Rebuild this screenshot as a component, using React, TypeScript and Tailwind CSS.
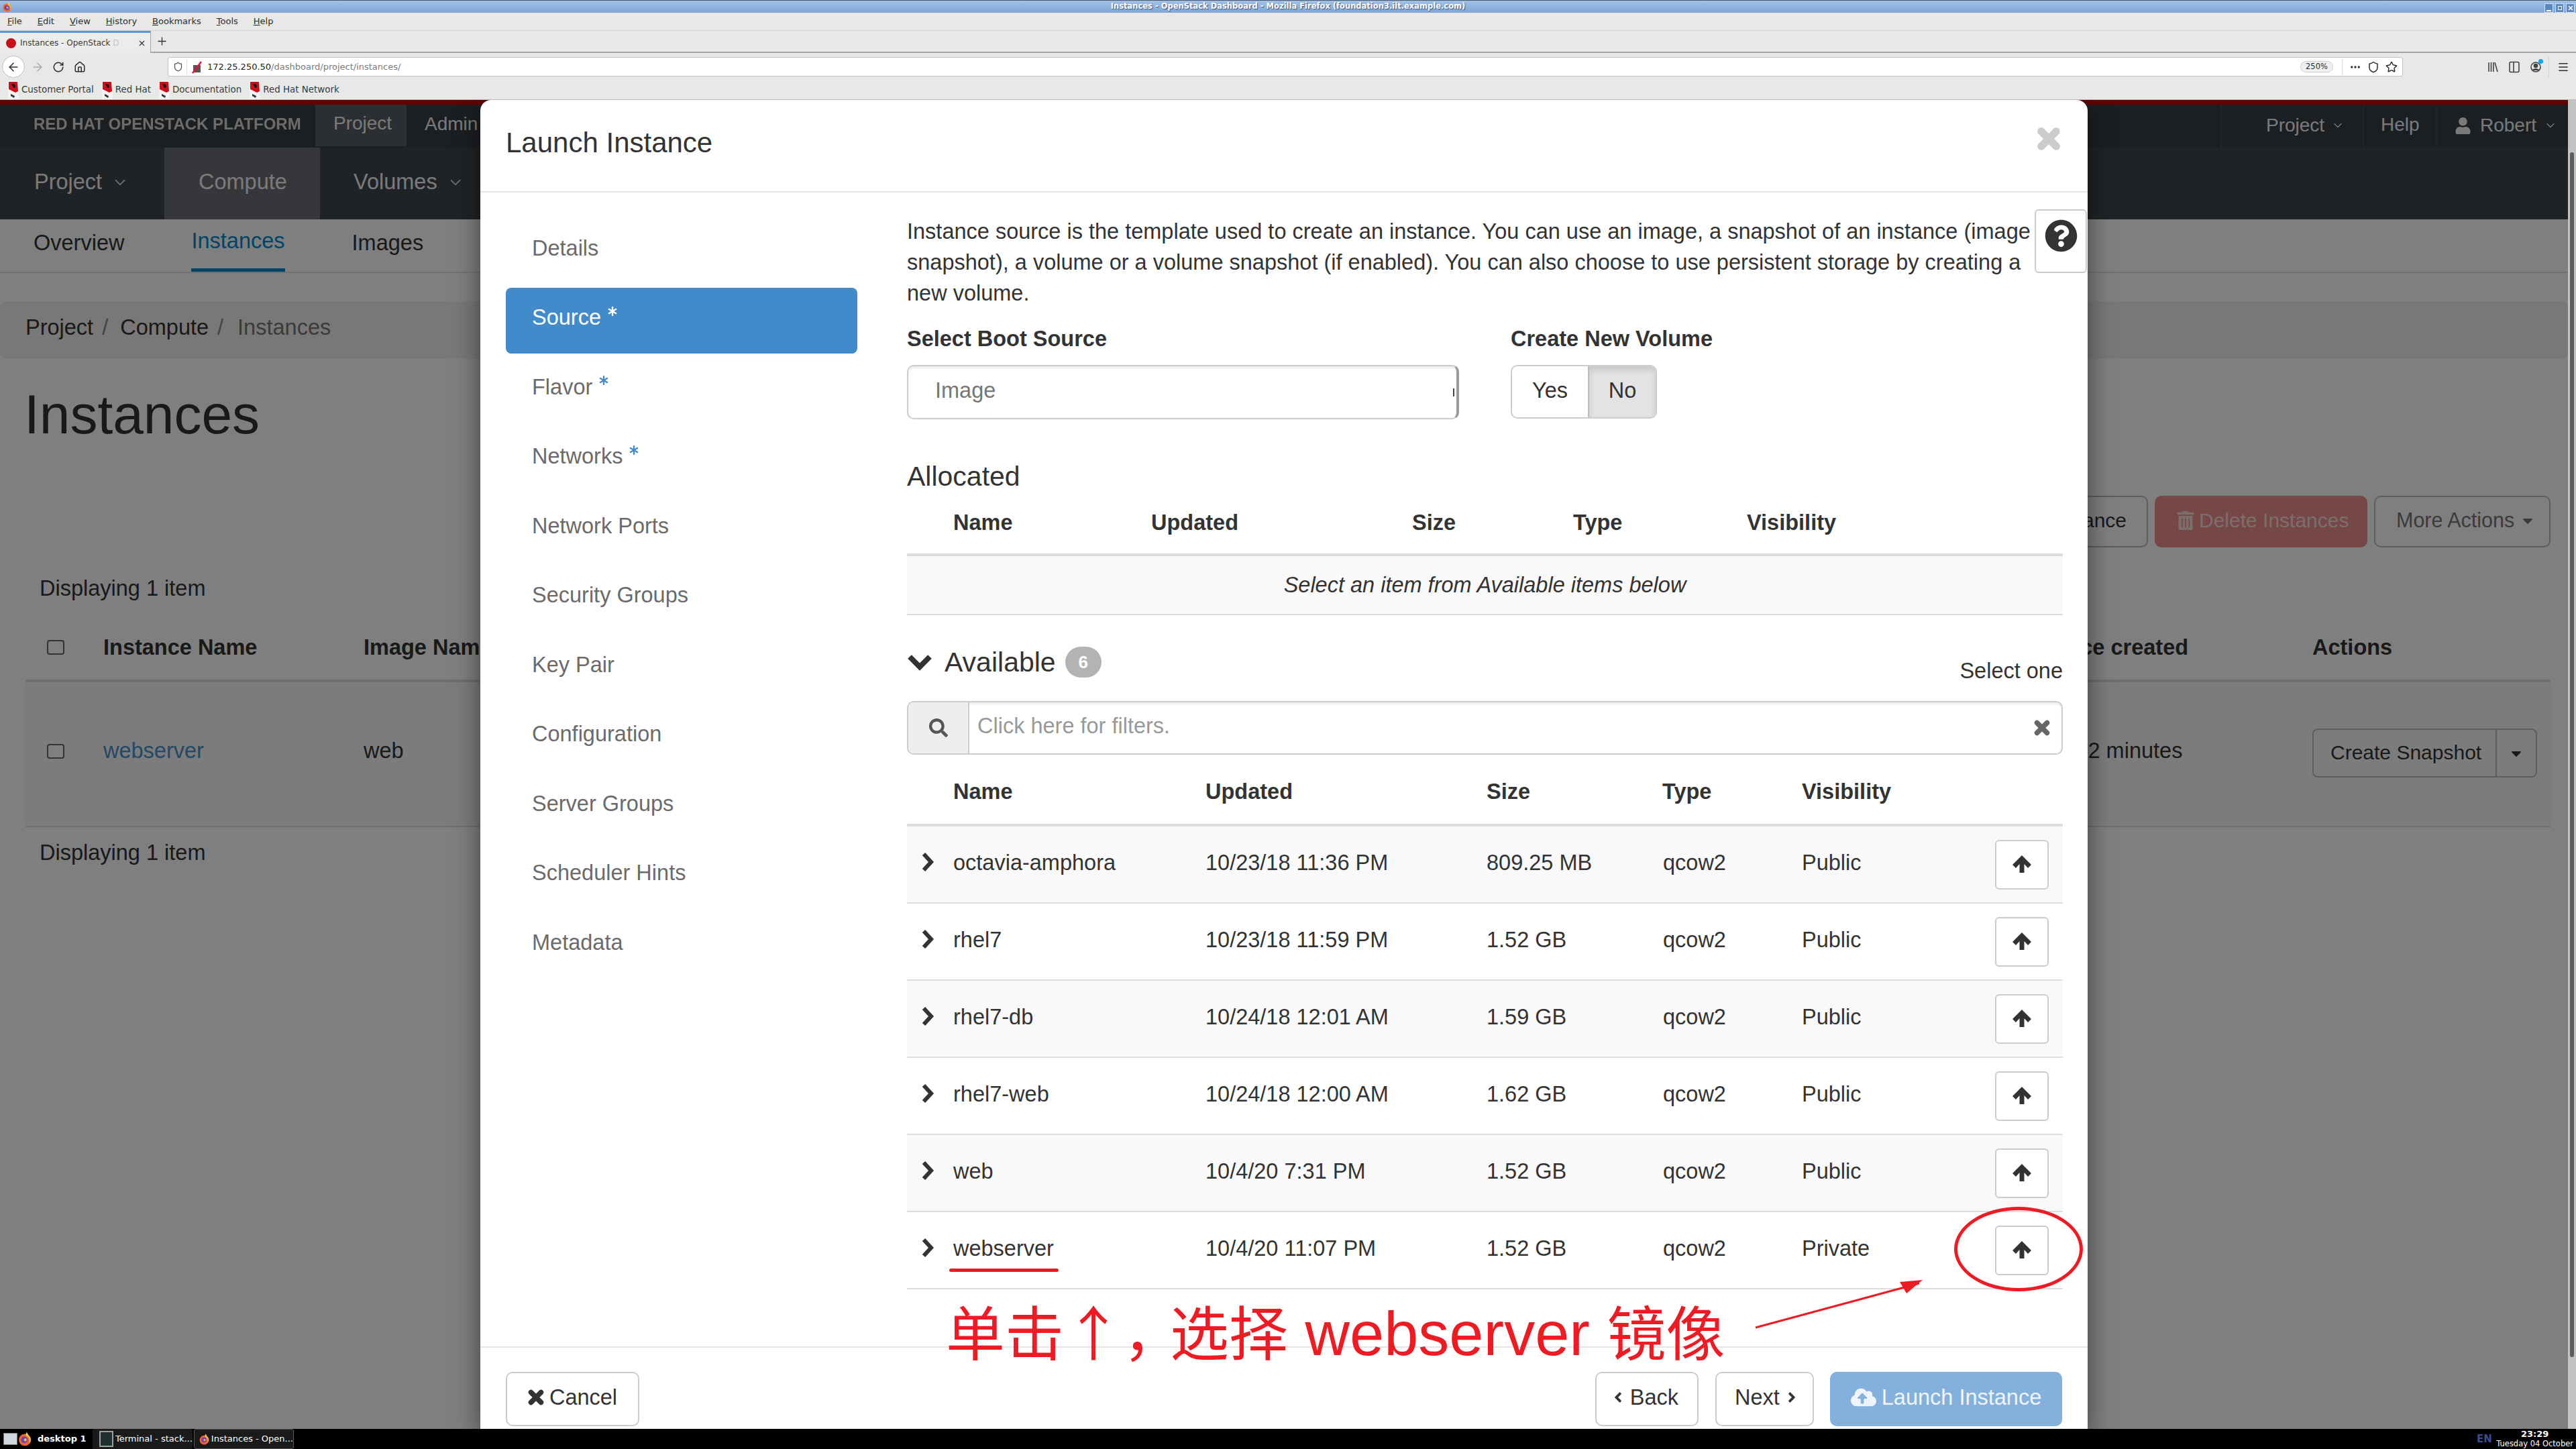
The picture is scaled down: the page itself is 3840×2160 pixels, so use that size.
// Launch Instance dialog over the OpenStack dashboard, inside a Firefox window

import {
  ArrowLeft,
  ArrowRight,
  RotateCw,
  Home,
  Shield,
  Star,
  MoreHorizontal,
  Menu,
  ChevronDown,
  Plus,
  X,
} from 'lucide-react';
import {
  FaCaretDown,
  FaCloudUploadAlt,
  FaAsterisk,
  FaQuestionCircle,
  FaSearch,
  FaTrashAlt,
  FaUser,
  FaAngleLeft,
  FaAngleRight,
} from 'react-icons/fa';

const images = [
  { name: 'octavia-amphora', updated: '10/23/18 11:36 PM', size: '809.25 MB', visibility: 'Public' },
  { name: 'rhel7', updated: '10/23/18 11:59 PM', size: '1.52 GB', visibility: 'Public' },
  { name: 'rhel7-db', updated: '10/24/18 12:01 AM', size: '1.59 GB', visibility: 'Public' },
  { name: 'rhel7-web', updated: '10/24/18 12:00 AM', size: '1.62 GB', visibility: 'Public' },
  { name: 'web', updated: '10/4/20 7:31 PM', size: '1.52 GB', visibility: 'Public' },
  { name: 'webserver', updated: '10/4/20 11:07 PM', size: '1.52 GB', visibility: 'Private' },
];

const steps = [
  { label: 'Details' },
  { label: 'Source', required: true, active: true },
  { label: 'Flavor', required: true },
  { label: 'Networks', required: true },
  { label: 'Network Ports' },
  { label: 'Security Groups' },
  { label: 'Key Pair' },
  { label: 'Configuration' },
  { label: 'Server Groups' },
  { label: 'Scheduler Hints' },
  { label: 'Metadata' },
];

// Thick Font Awesome 4 style glyphs
function ThickX({ size, className }: { size: number; className?: string }) {
  return (
    <svg width={size} height={size} viewBox="0 0 32 32" className={className}>
      <path d="M6 6 26 26M26 6 6 26" stroke="currentColor" strokeWidth="10" strokeLinecap="round" fill="none" />
    </svg>
  );
}

function ThickChevronRight() {
  return (
    <svg width="20" height="30" viewBox="0 0 20 30">
      <path d="M4 3 15 15 4 27" stroke="currentColor" strokeWidth="6" strokeLinejoin="miter" fill="none" />
    </svg>
  );
}

function ThickChevronDown() {
  return (
    <svg width="38" height="26" viewBox="0 0 38 26">
      <path d="M4 5 19 20 34 5" stroke="currentColor" strokeWidth="8" fill="none" />
    </svg>
  );
}

function ThickArrowUp() {
  return (
    <svg width="28" height="26" viewBox="0 0 28 26" fill="currentColor">
      <path d="M14 0 28 14 23 19 17.5 13V26H10.500V13L5 19 0 14z" />
    </svg>
  );
}

function FirefoxIcon({ size = 16 }: { size?: number }) {
  return (
    <svg width={size} height={size} viewBox="0 0 32 32">
      <circle cx="16" cy="18" r="13" fill="#f0622e" />
      <path d="M16 5c8 0 13 6 13 13 0 3-1 6-3 8 1-8-2-14-6-17 0-2-1-3-4-4z" fill="#ffb52e" />
      <path d="M20 1c2 3 4 5 3 10l-5-3c1-3 1-5 2-7z" fill="#ffd43a" />
      <circle cx="15" cy="18" r="7" fill="#6a3fc4" />
      <circle cx="17" cy="18" r="3" fill="#f7b64a" />
    </svg>
  );
}

function RedHatIcon() {
  return (
    <svg width="16" height="28" viewBox="0 0 16 28">
      <rect x="0" y="0" width="16" height="28" fill="#f2f2f2" />
      <path d="M1 2h13l1 14-4 2-10-5z" fill="#c8101a" />
      <path d="M5 5l5 1 1 4-3 1z" fill="#111" />
      <path d="M4 20l6 3-1 3-5-3z" fill="#333" />
    </svg>
  );
}

function Bookmark({ label }: { label: string }) {
  return (
    <div className="flex items-center gap-[4px] text-[13.4px] text-[#3a3a3a]">
      <RedHatIcon />
      <span>{label}</span>
    </div>
  );
}

function BrowserChrome() {
  return (
    <div
      className="flex flex-col shrink-0 bg-[#e8e8e6] text-[#2d2d2d]"
      style={{ fontFamily: '"DejaVu Sans", sans-serif' }}
    >
      {/* Title bar */}
      <div className="h-[19px] flex items-center justify-center relative border-t border-[#4a5a70] bg-gradient-to-b from-[#a2c0e4] to-[#7ea6d8]">
        <div className="absolute left-[3px] top-[2px]">
          <FirefoxIcon size={15} />
        </div>
        <span className="text-[11.5px] font-bold text-white [text-shadow:1px_1px_1px_#33507a]">
          Instances - OpenStack Dashboard - Mozilla Firefox (foundation3.ilt.example.com)
        </span>
        <div className="absolute right-[2px] top-[4px] flex gap-[3px]">
          <div className="w-[13px] h-[14px] bg-[#5e87bd] border border-[#d5e2f3] flex items-end justify-center pb-[1px]">
            <div className="w-[7px] h-[2px] bg-white" />
          </div>
          <div className="w-[13px] h-[14px] bg-[#5e87bd] border border-[#d5e2f3] flex items-center justify-center">
            <div className="w-[6px] h-[6px] border border-white" />
          </div>
          <div className="w-[13px] h-[14px] bg-[#5e87bd] border border-[#d5e2f3] flex items-center justify-center">
            <X size={10} color="#fff" strokeWidth={4} />
          </div>
        </div>
      </div>

      {/* Menu bar */}
      <div className="h-[27px] flex items-center pl-[11px] gap-[23px] text-[13px] border-b border-[#d0d0ce]">
        {['File', 'Edit', 'View', 'History', 'Bookmarks', 'Tools', 'Help'].map((m) => (
          <span key={m}>
            <span className="underline">{m[0]}</span>
            {m.slice(1)}
          </span>
        ))}
      </div>

      {/* Tab strip */}
      <div className="h-[33px] flex items-stretch border-b-2 border-[#a5a5a5]">
        <div className="w-[225px] -mb-[2px] flex items-center pl-[9px] pr-[6px] gap-[6px] bg-[#ececea] border-t-[3px] border-t-[#5d97d6] border-r border-r-[#a5a5a5]">
          <div className="w-[15px] h-[15px] rounded-full bg-[#c8101a] shrink-0" />
          <span className="text-[12px] whitespace-nowrap flex-1 text-[#3a3a3a]">
            Instances - OpenStack <span className="text-[#c4c4c4]">D</span>
          </span>
          <X size={13} strokeWidth={2} />
        </div>
        <div className="flex items-center pl-[7px]">
          <Plus size={19} strokeWidth={1.6} />
        </div>
      </div>

      {/* Navigation bar */}
      <div className="h-[41px] flex items-center relative">
        <div className="ml-[3px] w-[34px] h-[33px] rounded-full bg-white border border-[#bdbdbd] flex items-center justify-center">
          <ArrowLeft size={20} strokeWidth={1.8} />
        </div>
        <div className="ml-[7px] w-[24px] flex justify-center text-[#a9a9a9]">
          <ArrowRight size={20} strokeWidth={1.8} />
        </div>
        <div className="ml-[7px] w-[24px] flex justify-center">
          <RotateCw size={18} strokeWidth={2} />
        </div>
        <div className="ml-[8px] w-[24px] flex justify-center">
          <Home size={18} strokeWidth={2} />
        </div>
        <div className="ml-[119px] w-[3332px] h-[29px] rounded-[3px] bg-white border border-[#c4c4c4] flex items-center pl-[7px] pr-[7px]">
          <Shield size={15} strokeWidth={2} color="#555" />
          <div className="ml-[5px] w-px h-[22px] bg-[#dadada]" />
          <svg className="ml-[7px]" width="15" height="20" viewBox="0 0 15 20">
            <rect x="2" y="7" width="11" height="11" fill="#555" />
            <path d="M1 19 14 2" stroke="#e8123c" strokeWidth="2.5" />
          </svg>
          <span className="ml-[8px] text-[13px] whitespace-nowrap text-[#222]">
            172.25.250.50
            <span className="text-[#7a7a7a]">/dashboard/project/instances/</span>
          </span>
          <div className="ml-auto flex items-center">
            <div className="w-[49px] h-[17px] rounded-full bg-[#f0f0f0] border border-[#cfcfcf] flex items-center justify-center text-[11.5px]">
              250%
            </div>
            <div className="ml-[13px] w-px h-[22px] bg-[#dadada]" />
            <MoreHorizontal className="ml-[10px]" size={18} strokeWidth={2.5} />
            <Shield className="ml-[9px]" size={18} strokeWidth={2} />
            <Star className="ml-[9px]" size={18} strokeWidth={2} />
          </div>
        </div>
        <div className="ml-[126px] flex items-center gap-[16px] text-[#444]">
          <svg width="16" height="18" viewBox="0 0 16 18" stroke="#444" strokeWidth="1.6" fill="none">
            <path d="M2 2v14M5.500 2v14M9 2v14M11 2l4 14" />
          </svg>
          <svg width="16" height="18" viewBox="0 0 16 18" stroke="#444" strokeWidth="1.6" fill="none">
            <rect x="1" y="1.500" width="14" height="15" rx="2" />
            <path d="M7 2v14" />
          </svg>
          <div className="relative">
            <svg width="16" height="20" viewBox="0 0 16 20" stroke="#444" strokeWidth="1.6" fill="none">
              <circle cx="8" cy="10" r="7" />
              <circle cx="8" cy="8" r="2.500" fill="#444" />
              <path d="M3 15c2-3 8-3 10 0" fill="#444" />
            </svg>
            <div className="absolute -right-[3px] -top-[2px] w-[7px] h-[7px] rounded-full bg-[#0aa5ff]" />
          </div>
        </div>
        <div className="ml-[11px] w-px h-[30px] bg-[#d4d4d4]" />
        <div className="ml-[12px]">
          <Menu size={18} strokeWidth={2.2} />
        </div>
      </div>

      {/* Bookmarks toolbar */}
      <div className="h-[29px] flex items-center pl-[12px] gap-[12px] border-b border-[#bcbcbc]">
        <Bookmark label="Customer Portal" />
        <Bookmark label="Red Hat" />
        <Bookmark label="Documentation" />
        <Bookmark label="Red Hat Network" />
      </div>
    </div>
  );
}

function TopNav() {
  return (
    <div className="shrink-0">
      <div className="h-[7px] bg-[#cc0000]" />
      <div className="h-[64px] flex bg-[#393f44] text-[#f5f5f5] text-[28px]">
        <div className="w-[470px] pl-[50px] pb-[6px] flex items-center">
          <span className="text-[24px] font-bold text-[#d8d8d8] whitespace-nowrap blur-[0.6px]">
            RED HAT OPENSTACK PLATFORM
          </span>
        </div>
        <div className="w-[136px] h-[62px] pl-[27px] pb-[6px] flex items-center bg-[#585e64]">Project</div>
        <div className="pl-[27px] pb-[6px] flex items-center">Admin</div>
        <div className="ml-auto flex h-full">
          <div className="w-[212px] pl-[66px] pb-[2px] flex items-center gap-[10px] border-l-2 border-[#464c52]">
            Project
            <ChevronDown size={20} strokeWidth={1.6} />
          </div>
          <div className="w-[109px] pl-[25px] pb-[4px] flex items-center border-l-2 border-[#464c52]">Help</div>
          <div className="w-[197px] pl-[26px] pb-[2px] flex items-center border-l-2 border-[#464c52]">
            <FaUser size={25} className="mr-[13px]" />
            Robert
            <ChevronDown className="ml-[11px]" size={20} strokeWidth={1.6} />
          </div>
        </div>
      </div>
      <div className="h-[107px] flex bg-[#41464b] text-[#f5f5f5] text-[32.5px]">
        <div className="w-[245px] pl-[51px] pb-[4px] flex items-center gap-[14px]">
          Project
          <ChevronDown size={26} strokeWidth={1.6} />
        </div>
        <div className="w-[232px] pl-[51px] pb-[4px] flex items-center bg-[#6c6e74] text-[#f5f5f5]">Compute</div>
        <div className="pl-[50px] pb-[4px] flex items-center gap-[14px]">
          Volumes
          <ChevronDown size={26} strokeWidth={1.6} />
        </div>
      </div>
    </div>
  );
}

function PageBackground() {
  return (
    <div className="flex-1 min-w-0 flex flex-col bg-white text-[#333333] text-[32.5px]">
      <TopNav />
      {/* Sub tabs */}
      <div className="h-[80px] shrink-0 flex items-stretch pl-[50px] gap-[100px] border-b-2 border-[#e5e5e5]">
        <div className="flex items-center pb-[8px]">Overview</div>
        <div className="flex items-center pb-[8px] text-[#0088ce] border-b-[5px] border-[#0088ce]">Instances</div>
        <div className="flex items-center pb-[8px]">Images</div>
      </div>

      {/* Breadcrumb */}
      <div className="mt-[42px] h-[86px] shrink-0 rounded-[10px] bg-[#f1f1f1] flex items-center pb-[8px] pl-[38px]">
        <span>Project</span>
        <span className="ml-[13px] mr-[18px] text-[#888888]">/</span>
        <span>Compute</span>
        <span className="ml-[13px] mr-[21px] text-[#888888]">/</span>
        <span className="text-[#777777]">Instances</span>
      </div>

      <h1 className="mt-[33px] h-[100px] shrink-0 pl-[36px] text-[82px] leading-[100px] text-[#333333]">Instances</h1>

      <div className="pl-[38px] pr-[26px]">
        {/* Table actions */}
        <div className="mt-[71px] h-[77px] flex justify-end gap-[10px] text-[30px]">
          <div className="h-full px-[30px] pb-[4px] rounded-[10px] border-2 border-[#bbbbbb] flex items-center">
            Launch Instance
          </div>
          <div className="w-[317px] h-full pb-[4px] rounded-[10px] bg-[#ea8f8c] text-[#f8dcdb] flex items-center pl-[32px] gap-[6px]">
            <FaTrashAlt size={28} />
            Delete Instances
          </div>
          <div className="w-[263px] h-full pb-[4px] rounded-[10px] border-2 border-[#bbbbbb] flex items-center pl-[31px] gap-[8px] text-[#777777]">
            <span className="text-[30.5px]">More Actions</span>
            <FaCaretDown size={24} />
          </div>
        </div>

        <div className="mt-[41px] h-[40px] pl-[21px] leading-[40px]">Displaying 1 item</div>

        {/* Instance table */}
        <div className="h-[120px] pt-[20px] flex items-center border-b-4 border-[#dddddd] font-bold">
          <div className="w-[116px] pl-[32px]">
            <div className="w-[26px] h-[22px] rounded-[4px] border-2 border-[#666666] bg-white" />
          </div>
          <div className="w-[388px]">Instance Name</div>
          <div className="w-[2428px]">Image Name</div>
          <div className="w-[477px]">Time since created</div>
          <div>Actions</div>
        </div>
        <div className="h-[216px] flex items-center border-b-2 border-[#dddddd] bg-[#f9f9f9]">
          <div className="w-[116px] pl-[32px] pb-[8px]">
            <div className="w-[26px] h-[22px] rounded-[4px] border-2 border-[#666666] bg-white" />
          </div>
          <div className="w-[388px] pb-[10px] text-[#4a90c8]">webserver</div>
          <div className="w-[2428px] pb-[10px]">web</div>
          <div className="w-[477px] pl-[16px] pb-[10px]">1 hour, 22 minutes</div>
          <div className="w-[335px] h-[73px] -mt-[3px] flex rounded-[8px] border-2 border-[#bbbbbb] text-[30px]">
            <div className="flex-1 flex items-center pl-[25px] pb-[2px]">Create Snapshot</div>
            <div className="w-[60px] border-l-2 border-[#bbbbbb] flex items-center justify-center">
              <FaCaretDown size={24} />
            </div>
          </div>
        </div>
        <div className="mt-[18px] h-[40px] pl-[21px] leading-[40px]">Displaying 1 item</div>
      </div>
    </div>
  );
}

function OutlineButton({ className, children }: { className: string; children: React.ReactNode }) {
  return (
    <div
      className={`h-[81px] pb-[5px] flex items-center justify-center rounded-[10px] border-2 border-[#cccccc] bg-white text-[#333333] ${className}`}
    >
      {children}
    </div>
  );
}

function WizardSidebar() {
  return (
    <div className="w-[600px] shrink-0 pt-[38px] pl-[38px]">
      {steps.map((step) => (
        <div
          key={step.label}
          className={`w-[524px] h-[98px] mb-[5.5px] pl-[39px] pb-[8px] rounded-[8px] flex items-center text-[32.5px] ${
            step.active ? 'bg-[#428bca] text-white' : 'text-[#6b6b6b]'
          }`}
        >
          {step.label}
          {step.required && (
            <FaAsterisk
              size={14}
              className={`ml-[10px] -mt-[20px] ${step.active ? 'text-white' : 'text-[#428bca]'}`}
            />
          )}
        </div>
      ))}
    </div>
  );
}

function SourceStep() {
  return (
    <div className="flex-1 min-w-0 pl-[36px] pr-[37px] pt-[35px] text-[32.5px] text-[#333333]">
      <div className="flex items-start">
        <p className="w-[1682px] h-[136px] leading-[46px]">
          Instance source is the template used to create an instance. You can use an image, a snapshot of an instance
          (image snapshot), a volume or a volume snapshot (if enabled). You can also choose to use persistent storage by
          creating a new volume.
        </p>
        <div className="w-[78px] h-[95px] -mt-[10px] -mr-[36px] ml-auto pb-[16px] rounded-[6px] border-2 border-[#cccccc] flex items-center justify-center text-[#333333]">
          <FaQuestionCircle size={49} />
        </div>
      </div>

      {/* Boot source and volume */}
      <div className="mt-[26px] flex">
        <div className="w-[823px]">
          <div className="h-[40px] leading-[42px] font-bold mb-[20px]">Select Boot Source</div>
          <div className="relative h-[81px] rounded-[10px] border-2 border-[#cccccc] border-r-4 border-r-[#9a9a9a] shadow-[inset_0_3px_3px_rgba(0,0,0,0.08)] flex items-center pl-[40px] pb-[4px] text-[#777777]">
            Image
            <div className="absolute right-[3px] top-[33px] w-[2px] h-[12px] bg-[#444444]" />
          </div>
        </div>
        <div className="ml-[77px]">
          <div className="h-[40px] leading-[42px] font-bold mb-[20px]">Create New Volume</div>
          <div className="h-[80px] w-[218px] flex rounded-[10px] border-2 border-[#cccccc] overflow-hidden">
            <div className="w-[113px] flex items-center justify-center pb-[4px]">Yes</div>
            <div className="flex-1 flex items-center justify-center pb-[4px] bg-[#e3e3e3] border-l-2 border-[#bbbbbb] shadow-[inset_0_6px_10px_rgba(0,0,0,0.12)]">
              No
            </div>
          </div>
        </div>
      </div>

      {/* Allocated */}
      <h2 className="mt-[59px] h-[50px] leading-[52px] text-[41px]">Allocated</h2>
      <div className="h-[95px] flex items-center font-bold border-b-4 border-[#dddddd]">
        <div className="w-[364px] pl-[69px]">Name</div>
        <div className="w-[389px]">Updated</div>
        <div className="w-[240px]">Size</div>
        <div className="w-[259px]">Type</div>
        <div>Visibility</div>
      </div>
      <div className="h-[88px] flex items-center justify-center italic bg-[#f9f9f9] border-b-2 border-[#dddddd]">
        Select an item from Available items below
      </div>

      {/* Available */}
      <div className="mt-[42px] mb-[30px] h-[56px] flex items-center">
        <div className="mr-[18px]">
          <ThickChevronDown />
        </div>
        <span className="text-[41px] pt-[2px]">Available</span>
        <div className="ml-[14px] w-[54px] h-[46px] rounded-full bg-[#b3b3b3] text-white text-[26px] font-bold flex items-center justify-center">
          6
        </div>
        <span className="ml-auto mt-[26px]">Select one</span>
      </div>

      <div className="h-[80px] flex rounded-[10px] border-2 border-[#cccccc] overflow-hidden shadow-[inset_0_3px_3px_rgba(0,0,0,0.08)]">
        <div className="w-[91px] shrink-0 bg-[#eeeeee] border-r-2 border-[#cccccc] flex items-center justify-center text-[#555555]">
          <FaSearch size={28} />
        </div>
        <div className="flex-1 pl-[12px] pb-[6px] flex items-center text-[#999999]">Click here for filters.</div>
        <div className="w-[58px] flex items-center justify-center text-[#666666]">
          <ThickX size={24} />
        </div>
      </div>

      <div className="h-[107px] pt-[7px] flex items-center font-bold border-b-4 border-[#dddddd]">
        <div className="w-[445px] pl-[69px]">Name</div>
        <div className="w-[419px]">Updated</div>
        <div className="w-[262px]">Size</div>
        <div className="w-[208px]">Type</div>
        <div>Visibility</div>
      </div>
      {images.map((image, i) => (
        <div
          key={image.name}
          className={`h-[115px] flex items-center border-b-2 border-[#dddddd] ${i % 2 === 0 ? 'bg-[#f9f9f9]' : 'bg-white'}`}
        >
          <div className="w-[69px] pl-[21px] pb-[8px]">
            <ThickChevronRight />
          </div>
          <div className="w-[376px] pb-[4px]">{image.name}</div>
          <div className="w-[419px] pb-[4px]">{image.updated}</div>
          <div className="w-[262px] pb-[4px]">{image.size}</div>
          <div className="w-[208px] pl-[1px] pb-[4px]">qcow2</div>
          <div className="w-[288px] pb-[4px]">{image.visibility}</div>
          <div className="w-[80px] h-[74px] rounded-[6px] border-2 border-[#cccccc] bg-white flex items-center justify-center pb-[2px]">
            <ThickArrowUp />
          </div>
        </div>
      ))}
    </div>
  );
}

function LaunchDialog() {
  return (
    <div className="absolute left-[716px] top-0 bottom-0 w-[2396px] flex flex-col bg-white rounded-t-[16px] shadow-[0_12px_38px_rgba(0,0,0,0.5)]">
      <div className="h-[138px] shrink-0 flex items-center justify-between pl-[38px] pr-[40px] pb-[10px] border-b-2 border-[#e5e5e5]">
        <h1 className="text-[42px] text-[#333333]">Launch Instance</h1>
        <ThickX size={36} className="text-[#cccccc] -mt-[10px]" />
      </div>
      <div className="flex-1 min-h-0 flex">
        <WizardSidebar />
        <SourceStep />
      </div>
      <div className="h-[123px] shrink-0 pt-[36px] px-[38px] flex border-t-2 border-[#e5e5e5] text-[32.5px]">
        <OutlineButton className="w-[199px] gap-[8px]">
          <ThickX size={24} />
          Cancel
        </OutlineButton>
        <OutlineButton className="ml-auto w-[154px] pr-[8px] gap-[6px]">
          <FaAngleLeft size={24} />
          Back
        </OutlineButton>
        <OutlineButton className="ml-[25px] w-[147px] pl-[8px] gap-[6px]">
          Next
          <FaAngleRight size={24} />
        </OutlineButton>
        <div className="ml-[24px] w-[346px] h-[81px] pb-[5px] rounded-[10px] bg-[#84b1dc] text-[#eef4fa] flex items-center justify-center gap-[8px]">
          <FaCloudUploadAlt size={38} />
          Launch Instance
        </div>
      </div>

      {/* Red annotations drawn on top of the screenshot */}
      <div className="absolute left-[699px] top-[1742px] w-[163px] h-[5px] bg-[#ed1c24] rounded-full" />
      <div
        className="absolute left-[694px] top-[1788px] whitespace-nowrap text-[88px] leading-[90px] text-[#ed1c24]"
        style={{ fontFamily: '"Noto Sans CJK SC", "Liberation Sans", sans-serif' }}
      >
        单击↑，<span className="-ml-[18px]">选择</span>
        <span className="text-[92px]" style={{ fontFamily: '"Liberation Sans", sans-serif' }}>
          {' webserver '}
        </span>
        <span>镜像</span>
      </div>
      <svg className="absolute left-[1890px] top-[1640px]" width="420" height="210" viewBox="0 0 420 210" fill="none">
        <path d="M11 190 255 124" stroke="#ed1c24" strokeWidth="3" />
        <path d="M260 119 226 122 236 139z" fill="#ed1c24" />
      </svg>
      <div className="absolute left-[2197px] top-[1650px] w-[192px] h-[126px] rounded-[50%] border-[5px] border-[#ed1c24]" />
    </div>
  );
}

function Scrollbar() {
  return (
    <div className="w-[12px] shrink-0 bg-[#c2c2c2] pt-[78px] pb-[107px] flex justify-center">
      <div className="w-[6px] h-full rounded-full bg-[#5c5c5c]" />
    </div>
  );
}

function Taskbar() {
  return (
    <div
      className="h-[30px] shrink-0 bg-black flex items-stretch text-white text-[13px] relative"
      style={{ fontFamily: '"DejaVu Sans", sans-serif' }}
    >
      <div className="w-[138px] flex items-center pl-[5px]">
        <div className="w-[21px] h-[18px] bg-[#cfd6dc] border border-[#777777]" />
        <FirefoxIcon size={22} />
        <span className="ml-[8px] font-bold whitespace-nowrap">desktop 1</span>
      </div>
      <div className="w-[149px] flex items-center pl-[10px] gap-[3px] bg-[#1a1a1a] rounded-[3px]">
        <div className="w-[21px] h-[24px] bg-[#1f3030] border-2 border-[#9aa0a0]" />
        <span className="whitespace-nowrap">Terminal - stack...</span>
      </div>
      <div className="ml-[2px] w-[149px] flex items-center pl-[6px] gap-[2px] bg-[#1a1a1a] rounded-[3px] border border-[#555555]">
        <FirefoxIcon size={23} />
        <span className="whitespace-nowrap">Instances - Open...</span>
      </div>
      <div className="absolute left-[3692px] top-[4px] text-[15px] font-bold text-[#3b4c96]">EN</div>
      <div className="ml-auto pr-[4px] flex flex-col items-center leading-[15px]">
        <span className="font-bold text-[13px]">23:29</span>
        <span className="text-[11.5px] whitespace-nowrap">Tuesday 04 October</span>
      </div>
    </div>
  );
}

export default function App() {
  return (
    <div
      className="w-[3840px] h-[2160px] flex flex-col overflow-hidden bg-white"
      style={{ fontFamily: '"Liberation Sans", Arial, sans-serif' }}
    >
      <BrowserChrome />
      <div className="flex-1 min-h-0 flex relative overflow-hidden">
        <PageBackground />
        <Scrollbar />
        {/* Modal backdrop, page width only */}
        <div className="absolute left-0 top-0 bottom-0 w-[3828px] bg-black/50" />
        <LaunchDialog />
      </div>
      <Taskbar />
    </div>
  );
}
